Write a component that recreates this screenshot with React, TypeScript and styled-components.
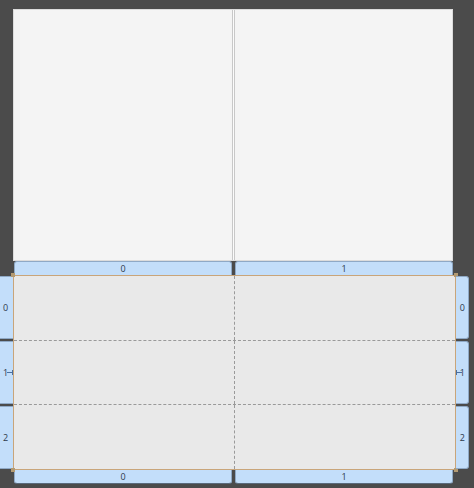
import React from "react";
import styled, { createGlobalStyle } from "styled-components";

const GlobalStyle = createGlobalStyle`
  html, body {
    margin: 0;
    padding: 0;
    background: #4b4b4b;
  }
  body {
    font-family: "Open Sans", "DejaVu Sans", sans-serif;
  }
`;

const columns = ["0", "1"];
const rows = ["0", "1", "2"];

export default function App() {
  return (
    <Page>
      <GlobalStyle />
      <TopPanel>
        <TopColumn />
        <Splitter />
        <TopColumn />
      </TopPanel>

      <HeaderRow>
        {columns.map(c => (
          <ColumnHeader key={c} side="top">
            {c}
          </ColumnHeader>
        ))}
      </HeaderRow>

      <Middle>
        <RowHeaders>
          {rows.map(r => (
            <RowHeader key={r} side="left">
              {r}
              {r === "1" && <Handle side="left" />}
            </RowHeader>
          ))}
        </RowHeaders>

        <Grid>
          {rows.map(r => (
            <GridRow key={r} last={r === "2"}>
              <GridCell />
              <GridCell last />
            </GridRow>
          ))}
          <Corner style={{ left: -3, top: -3 }} />
          <Corner style={{ right: -3, top: -3 }} />
          <Corner style={{ left: -3, bottom: -3 }} />
          <Corner style={{ right: -3, bottom: -3 }} />
        </Grid>

        <RowHeaders>
          {rows.map(r => (
            <RowHeader key={r} side="right">
              {r}
              {r === "1" && <Handle side="right" />}
            </RowHeader>
          ))}
        </RowHeaders>
      </Middle>

      <HeaderRow>
        {columns.map(c => (
          <ColumnHeader key={c} side="bottom">
            {c}
          </ColumnHeader>
        ))}
      </HeaderRow>
    </Page>
  );
}

const Page = styled.div`
  width: 474px;
  height: 488px;
  padding-top: 9px;
  box-sizing: border-box;
  background: #4b4b4b;
  overflow: hidden;
`;

const TopPanel = styled.div`
  margin-left: 13px;
  width: 440px;
  height: 252px;
  box-sizing: border-box;
  display: flex;
  background: #f4f4f4;
  border: 1px solid #dcdcdc;
`;

const TopColumn = styled.div`
  flex: 1;
`;

const Splitter = styled.div`
  width: 3px;
  box-sizing: border-box;
  border-left: 1px solid #c8c8c8;
  border-right: 1px solid #c8c8c8;
  background: #fbfbfb;
`;

const HeaderRow = styled.div`
  margin-left: 14px;
  width: 439px;
  height: 14px;
  display: flex;
  gap: 3px;
`;

const ColumnHeader = styled.div<{ side: "top" | "bottom" }>`
  flex: 1;
  box-sizing: border-box;
  display: flex;
  align-items: center;
  justify-content: center;
  font-size: 9px;
  color: #2e3a4a;
  background: #c3defa;
  border: 1px solid #8fa9c6;
  border-radius: ${p => (p.side === "top" ? "3px 3px 0 0" : "0 0 3px 3px")};
  ${p => (p.side === "top" ? "border-bottom: none;" : "border-top: none; border-bottom: 1px solid #5a6a7c;")}
`;

const Middle = styled.div`
  display: flex;
  height: 195px;
`;

const RowHeaders = styled.div`
  width: 13px;
  display: flex;
  flex-direction: column;
  gap: 2px;
  padding: 1px 0;
  box-sizing: border-box;
`;

const RowHeader = styled.div<{ side: "left" | "right" }>`
  position: relative;
  flex: 1;
  box-sizing: border-box;
  display: flex;
  align-items: center;
  justify-content: ${p => (p.side === "left" ? "flex-start" : "flex-end")};
  padding: 0 3px;
  font-size: 9px;
  color: #2e3a4a;
  background: #c3defa;
  border: 1px solid #8fa9c6;
  ${p =>
    p.side === "left"
      ? "border-left: none; border-right: none;"
      : "border-left: none; border-radius: 0 3px 3px 0;"}
`;

const Handle = styled.span<{ side: "left" | "right" }>`
  position: absolute;
  top: 50%;
  width: 6px;
  height: 5px;
  margin-top: -3px;
  box-sizing: border-box;
  ${p => (p.side === "left" ? "right: 0; border-right: 1px solid #4a6fa0;" : "left: 0; border-left: 1px solid #4a6fa0;")}
  &::after {
    content: "";
    position: absolute;
    left: 0;
    right: 0;
    top: 2px;
    height: 1px;
    background: #4a6fa0;
  }
`;

const Grid = styled.div`
  position: relative;
  width: 443px;
  box-sizing: border-box;
  display: flex;
  flex-direction: column;
  background: #e9e9e9;
  border: 1px solid #c9a57a;
`;

const GridRow = styled.div<{ last?: boolean }>`
  flex: 1;
  display: flex;
  border-bottom: ${p => (p.last ? "none" : "1px dashed #9a9a9a")};
`;

const GridCell = styled.div<{ last?: boolean }>`
  flex: 1;
  border-right: ${p => (p.last ? "none" : "1px dashed #9a9a9a")};
`;

const Corner = styled.span`
  position: absolute;
  width: 4px;
  height: 4px;
  background: #b39a72;
`;
